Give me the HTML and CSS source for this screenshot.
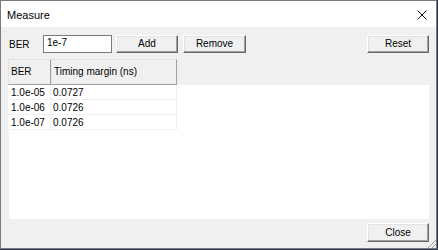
FILE: index.html
```html
<!DOCTYPE html>
<html lang="en">
<head>
  <meta charset="UTF-8" />
  <title>Measure</title>
  <link rel="stylesheet" href="styles.css">
</head>
<body>
  <div class="window">
    <div class="titlebar">
      <span class="title">Measure</span>
      <svg class="close-x" width="10" height="10" viewBox="0 0 10 10">
        <path d="M0.5 0.5 L9.5 9.5 M9.5 0.5 L0.5 9.5" stroke="#111" stroke-width="1" fill="none" />
      </svg>
    </div>

    <div class="client">
      <div class="toolbar">
        <span class="label">BER</span>
        <div class="input">1e-7</div>
        <button class="btn btn-add">Add</button>
        <button class="btn btn-remove">Remove</button>
        <div class="spacer"></div>
        <button class="btn btn-reset">Reset</button>
      </div>

      <div class="table">
        <div class="thead">
          <div class="th col-ber">BER</div>
          <div class="th col-tm">Timing margin (ns)</div>
        </div>
        <div class="tbody">
          <div class="tr"><div class="td col-ber">1.0e-05</div><div class="td col-tm">0.0727</div></div>
          <div class="tr"><div class="td col-ber">1.0e-06</div><div class="td col-tm">0.0726</div></div>
          <div class="tr"><div class="td col-ber">1.0e-07</div><div class="td col-tm">0.0726</div></div>
        </div>
      </div>

      <div class="footer">
        <button class="btn btn-close">Close</button>
      </div>
      <div class="grip"></div>
    </div>
  </div>
</body>
</html>
```

FILE: styles.css
```css
body {
  margin: 0;
  background: #2b3550;
  font-family: 'Liberation Sans', Arial, sans-serif;
  font-size: 10px;
  color: #000;
}

.window {
  width: 437px;
  height: 249px;
  box-sizing: border-box;
  border: 1px solid #7a7a7a;
  background: #f0f0f0;
  display: flex;
  flex-direction: column;
}

.titlebar {
  height: 26px;
  background: #fff;
  display: flex;
  align-items: center;
  padding: 0 9px 0 6px;
  flex-shrink: 0;
}

.title {
  font-size: 11px;
  flex: 1;
  padding-top: 1px;
}

.close-x {
  display: block;
  margin-top: 1px;
}

.client {
  flex: 1;
  display: flex;
  flex-direction: column;
  padding: 8px 7px 0 7px;
  position: relative;
}

.toolbar {
  display: flex;
  align-items: center;
  height: 18px;
}

.label {
  width: 35px;
  padding-left: 1px;
  box-sizing: border-box;
}

.input {
  width: 69px;
  height: 18px;
  box-sizing: border-box;
  border: 1px solid #7a7a7a;
  background: #fff;
  padding: 0 3px;
  line-height: 14px;
  margin-right: 4px;
}

.btn {
  height: 18px;
  box-sizing: border-box;
  font: inherit;
  color: #000;
  background: #f0f0f0;
  border: 1px solid;
  border-color: #fff #696969 #696969 #fff;
  box-shadow: inset -1px -1px 0 #a0a0a0, inset 1px 1px 0 #e3e3e3;
  padding: 0;
  line-height: 14px;
}

.btn-add { width: 62px; margin-right: 5px; }
.btn-remove { width: 63px; }
.btn-reset { width: 62px; }
.spacer { flex: 1; }

.table {
  margin-top: 6px;
  height: 160px;
  display: flex;
  flex-direction: column;
  width: 421px;
}

.thead {
  display: flex;
  height: 26px;
  flex-shrink: 0;
}

.th {
  box-sizing: border-box;
  border-top: 1px solid #e3e3e3;
  border-left: 1px solid #e3e3e3;
  border-right: 1px solid #a0a0a0;
  border-bottom: 1px solid #a0a0a0;
  padding: 0 2px;
  line-height: 24px;
  white-space: nowrap;
}

.col-ber { width: 43px; }
.col-tm { width: 126px; }

.tbody {
  flex: 1;
  background: #fff;
  margin-left: 1px;
}

.tr {
  display: flex;
  height: 15px;
  margin-left: -1px;
}

.td {
  box-sizing: border-box;
  border-right: 1px solid #f0f0f0;
  border-bottom: 1px solid #f0f0f0;
  padding: 0 2px;
  line-height: 15px;
  background: #fff;
  white-space: nowrap;
}

.tr .col-ber { padding-left: 3px; }

.footer {
  display: flex;
  justify-content: flex-end;
  margin-top: 4px;
}

.btn-close {
  width: 62px;
  height: 19px;
}

.grip {
  position: absolute;
  right: 0;
  bottom: 0;
  width: 8px;
  height: 8px;
  background: linear-gradient(135deg, transparent 45%, #a0a0a0 45%, #a0a0a0 52%, transparent 52%, transparent 70%, #a0a0a0 70%, #a0a0a0 77%, transparent 77%);
}
```
